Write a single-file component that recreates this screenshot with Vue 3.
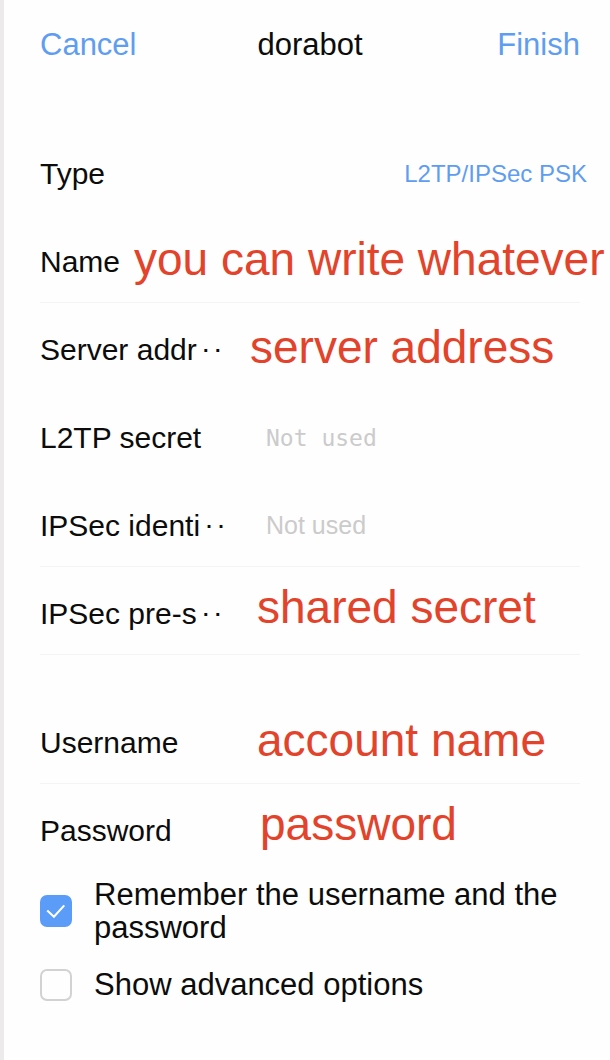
<script setup>
import { reactive, ref } from 'vue'

const account = reactive([
  { id: 'name', label: 'Name', value: 'you can write whatever', kind: 'wide', line: true },
  { id: 'server', label: 'Server addr', cut: true, value: 'server address', kind: 'near' },
  { id: 'l2tp', label: 'L2TP secret', value: '', kind: 'hint mono' },
  { id: 'identifier', label: 'IPSec identi', cut: true, value: '', kind: 'hint', line: true },
  { id: 'psk', label: 'IPSec pre-s', cut: true, value: 'shared secret', kind: 'high', line: true },
])
const login = reactive([
  { id: 'username', label: 'Username', value: 'account name', kind: '', line: true },
  { id: 'password', label: 'Password', value: 'password', kind: 'high far' },
])
const remember = ref(true)
const advanced = ref(false)
</script>

<template>
  <main class="page">
    <header class="bar">
      <button type="button" class="action">Cancel</button>
      <h1>dorabot</h1>
      <button type="button" class="action end">Finish</button>
    </header>
    <form @submit.prevent>
      <section>
        <div class="row">
          <span id="type-label" class="label">Type</span>
          <button type="button" class="type" aria-describedby="type-label">L2TP/IPSec PSK</button>
        </div>
        <div v-for="f in account" :key="f.id" class="row" :class="[f.kind, { line: f.line }]">
          <label class="label" :for="f.id">{{ f.label }}<span v-if="f.cut" class="dots">··</span></label>
          <input :id="f.id" v-model="f.value" type="text" placeholder="Not used" />
        </div>
      </section>
      <section class="login">
        <div v-for="f in login" :key="f.id" class="row" :class="[f.kind, { line: f.line }]">
          <label class="label" :for="f.id">{{ f.label }}</label>
          <input :id="f.id" v-model="f.value" type="text" />
        </div>
      </section>
      <section class="checks">
        <label class="check">
          <span class="box">
            <input v-model="remember" type="checkbox" />
            <svg v-if="remember" viewBox="0 0 31 31" aria-hidden="true"><path d="M7 15 L13.5 21 L23.5 10" /></svg>
          </span>
          <span>Remember the username and the password</span>
        </label>
        <label class="check">
          <span class="box">
            <input v-model="advanced" type="checkbox" />
            <svg v-if="advanced" viewBox="0 0 31 31" aria-hidden="true"><path d="M7 15 L13.5 21 L23.5 10" /></svg>
          </span>
          <span>Show advanced options</span>
        </label>
      </section>
    </form>
  </main>
</template>

<style>
body {
  background: #fefefe;
}
</style>

<style scoped>
.page {
  box-sizing: border-box;
  min-height: 100vh;
  border-left: 4px solid #eceaeb;
  padding: 0 30px 0 36px;
  color: #0c0c0c;
  font-family: 'Liberation Sans', Arial, sans-serif;
  font-size: 30px;
  line-height: 34px;
}
button,
input {
  margin: 0;
  border: 0;
  padding: 0;
  background: none;
  font: inherit;
}
.bar {
  display: grid;
  grid-template-columns: 1fr auto 1fr;
  align-items: center;
  box-sizing: border-box;
  height: 127px;
  padding-bottom: 38px;
  font-size: 31px;
}
h1 {
  margin: 0;
  font-size: 31px;
  font-weight: 400;
}
.action {
  color: #5f9df0;
  text-align: left;
}
.end {
  text-align: right;
}
.row {
  display: flex;
  align-items: center;
  box-sizing: border-box;
  height: 88px;
  padding-top: 6px;
  border-bottom: 1px solid transparent;
}
.line {
  border-bottom-color: #f4f4f4;
}
.label {
  flex: none;
  width: 217px;
  white-space: nowrap;
}
.dots {
  padding-left: 3px;
  font-family: 'Liberation Mono', monospace;
  font-size: 20px;
  font-weight: 700;
  line-height: 20px;
  vertical-align: 4px;
}
.type {
  margin: 0 -7px 0 auto;
  color: #5f9df0;
  font-size: 24px;
}
.row input {
  flex: 1;
  min-width: 0;
  height: 56px;
  margin-bottom: 6px;
  outline: 0;
  color: #e2432a;
  font-size: 46px;
}
.wide .label {
  width: auto;
  margin-right: 14px;
}
.wide input {
  margin-right: -30px;
}
.near .label {
  width: 210px;
}
.far .label {
  width: 220px;
}
.row.high input {
  margin-bottom: 14px;
}
.row.hint input {
  margin-bottom: 0;
  font-size: 25px;
}
.hint .label {
  width: 226px;
}
.row.mono input {
  font-family: 'DejaVu Sans Mono', monospace;
  font-size: 23px;
}
input::placeholder {
  color: #cbcbcb;
  opacity: 1;
}
.login {
  margin-top: 41px;
}
.checks {
  display: grid;
  gap: 24px;
  padding-top: 6px;
}
.check {
  display: flex;
  align-items: center;
  gap: 22px;
  font-size: 31px;
  line-height: 33px;
}
.box {
  position: relative;
  flex: none;
  width: 32px;
  height: 32px;
}
.box input {
  display: block;
  appearance: none;
  box-sizing: border-box;
  width: 32px;
  height: 32px;
  border: 2px solid #d2d2d2;
  border-radius: 7px;
}
.box input:checked {
  border-color: #5b9cf8;
  background: #5b9cf8;
}
.box svg {
  position: absolute;
  inset: 0;
  pointer-events: none;
}
.box path {
  fill: none;
  stroke: #fff;
  stroke-width: 2;
}
</style>
